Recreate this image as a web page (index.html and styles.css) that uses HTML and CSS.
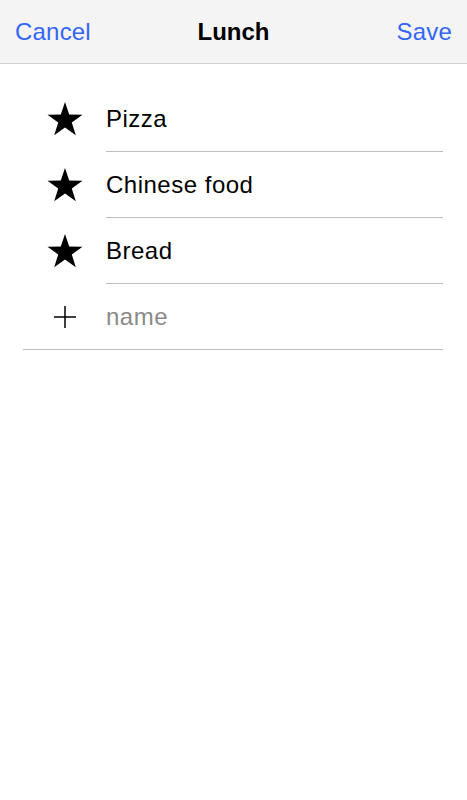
FILE: index.html
```html
<!DOCTYPE html>
<html lang="en">
<head>
<meta charset="UTF-8">
<meta name="viewport" content="width=device-width, initial-scale=1.0">
<title>Lunch</title>
<link rel="stylesheet" href="styles.css">
</head>
<body>
  <header class="navbar">
    <a class="nav-btn" href="#">Cancel</a>
    <h1 class="nav-title">Lunch</h1>
    <a class="nav-btn nav-right" href="#">Save</a>
  </header>

  <ul class="food-list">
    <li class="food-row">
      <span class="food-icon">
        <svg width="36" height="34" viewBox="0 0 36 34"><polygon points="18,0 22.2,12.6 35.5,12.7 24.8,20.6 28.8,33.3 18,25.5 7.2,33.3 11.2,20.6 0.5,12.7 13.8,12.6"/></svg>
      </span>
      <span class="food-name">Pizza</span>
    </li>
    <li class="food-row">
      <span class="food-icon">
        <svg width="36" height="34" viewBox="0 0 36 34"><polygon points="18,0 22.2,12.6 35.5,12.7 24.8,20.6 28.8,33.3 18,25.5 7.2,33.3 11.2,20.6 0.5,12.7 13.8,12.6"/></svg>
      </span>
      <span class="food-name">Chinese food</span>
    </li>
    <li class="food-row">
      <span class="food-icon">
        <svg width="36" height="34" viewBox="0 0 36 34"><polygon points="18,0 22.2,12.6 35.5,12.7 24.8,20.6 28.8,33.3 18,25.5 7.2,33.3 11.2,20.6 0.5,12.7 13.8,12.6"/></svg>
      </span>
      <span class="food-name">Bread</span>
    </li>
    <li class="food-row add-row">
      <span class="food-icon">
        <svg width="22" height="22" viewBox="0 0 22 22"><path d="M11 0V22M0 11H22" stroke="#000" stroke-width="1.5"/></svg>
      </span>
      <span class="food-name placeholder">name</span>
    </li>
  </ul>
</body>
</html>
```

FILE: styles.css
```css
* {
margin: 0;
padding: 0;
box-sizing: border-box;
}
body {
font-family: "Liberation Sans", Arial, sans-serif;
background: #fff;
color: #000;
}
.navbar {
display: grid;
grid-template-columns: 1fr auto 1fr;
align-items: center;
height: 64px;
padding: 1px 15px 0 15px;
background: #f4f4f4;
border-bottom: 1px solid #d0d0d0;
}
.nav-btn {
color: #3366f5;
font-size: 24px;
letter-spacing: 0.2px;
text-decoration: none;
}
.nav-right {
justify-self: end;
}
.nav-title {
font-size: 24px;
font-weight: bold;
}
.food-list {
list-style: none;
margin: 22px 24px 0 23px;
}
.food-row {
display: flex;
height: 66px;
}
.food-icon {
display: flex;
align-items: center;
justify-content: center;
width: 83px;
flex-shrink: 0;
}
.food-name {
flex: 1;
display: flex;
align-items: center;
font-size: 24px;
letter-spacing: 0.5px;
border-bottom: 1px solid #bdbdbd;
}
.add-row {
border-bottom: 1px solid #bdbdbd;
}
.add-row .food-name {
border-bottom: none;
}
.placeholder {
color: #8a8a8a;
}
```
